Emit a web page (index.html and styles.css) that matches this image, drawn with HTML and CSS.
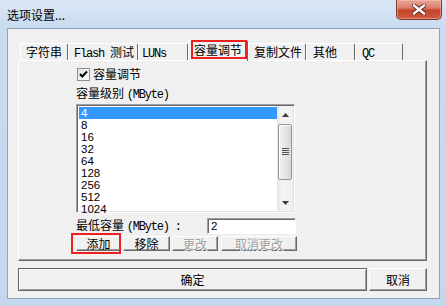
FILE: index.html
```html
<!DOCTYPE html>
<html>
<head>
<meta charset="utf-8">
<title>选项设置</title>
<link rel="stylesheet" href="styles.css">
</head>
<body>
<div class="window">
  <div class="titlebar">
    <span class="title">选项设置...</span>
    <div class="close">
      <svg width="14" height="11" viewBox="0 0 14 11">
        <path d="M2 1.5 L12 9.5 M12 1.5 L2 9.5" stroke="#5a1d14" stroke-width="4.2" stroke-linecap="square" fill="none"/>
        <path d="M2 1.5 L12 9.5 M12 1.5 L2 9.5" stroke="#ffffff" stroke-width="2.4" stroke-linecap="square" fill="none"/>
      </svg>
    </div>
  </div>
  <div class="client">
    <div class="tabs">
      <div class="tabstrip">
        <div class="tab t1">字符串</div>
        <div class="tab t2"><span class="mono">Flash </span>测试</div>
        <div class="tab t3"><span class="mono">LUNs</span></div>
        <div class="tab sel">容量调节</div>
        <div class="tab t5">复制文件</div>
        <div class="tab t6">其他</div>
        <div class="tab t7"><span class="mono">QC</span></div>
      </div>
      <div class="tabbody">
        <div class="checkrow">
          <span class="cbox">
            <svg width="11" height="11" viewBox="0 0 11 11"><path d="M2 5 L4.3 7.5 L9 2.5" stroke="#000" stroke-width="2" fill="none"/></svg>
          </span>
          <span>容量调节</span>
        </div>
        <div class="caption">容量级别 <span class="mono">(MByte)</span></div>
        <div class="listbox">
          <div class="items">
            <div class="item selected">4</div>
            <div class="item">8</div>
            <div class="item">16</div>
            <div class="item">32</div>
            <div class="item">64</div>
            <div class="item">128</div>
            <div class="item">256</div>
            <div class="item">512</div>
            <div class="item">1024</div>
          </div>
          <div class="vscroll">
            <div class="sbtn"><svg width="7" height="4" viewBox="0 0 7 4"><path d="M0 4 L3.5 0 L7 4 Z" fill="#3b3b3b"/></svg></div>
            <div class="track">
              <div class="thumb">
                <div class="grip"></div>
              </div>
            </div>
            <div class="sbtn"><svg width="7" height="4" viewBox="0 0 7 4"><path d="M0 0 L7 0 L3.5 4 Z" fill="#3b3b3b"/></svg></div>
          </div>
        </div>
        <div class="minrow">
          <span class="minlabel">最低容量 <span class="mono">(MByte) :</span></span>
          <div class="input">2</div>
        </div>
        <div class="btnrow">
          <div class="sbutton b-add">添加</div>
          <div class="sbutton b-del">移除</div>
          <div class="sbutton b-chg disabled">更改</div>
          <div class="sbutton b-cancel disabled">取消更改</div>
        </div>
      </div>
    </div>
    <div class="footer">
      <div class="btn ok">确定</div>
      <div class="btn cancel">取消</div>
    </div>
  </div>
</div>
</body>
</html>
```

FILE: styles.css
```css
* { box-sizing: border-box; margin: 0; padding: 0; }
html, body { width: 446px; height: 306px; overflow: hidden; }
body {
  font-family: "Noto Sans CJK SC", "Liberation Sans", sans-serif;
  font-size: 12px;
  color: #000;
  background: #c5d8ee;
}
.mono {
  font-family: "Liberation Mono", monospace;
  font-size: 12px;
  letter-spacing: -1.2px;
}
.window {
  width: 446px;
  height: 306px;
  display: flex;
  flex-direction: column;
  background: linear-gradient(180deg, #dbe7f5 0, #c9dbef 28px, #c4d7ed 100%);
}
.titlebar {
  height: 28px;
  flex: none;
  display: flex;
  align-items: flex-start;
  padding-left: 7px;
  padding-right: 4px;
}
.title {
  font-size: 12px;
  line-height: 14px;
  margin-top: 8px;
}
.close {
  margin-left: auto;
  width: 46px;
  height: 20px;
  border: 1px solid #7a3a30;
  border-top: none;
  border-radius: 0 0 5px 5px;
  background: linear-gradient(180deg, #e8a797 0, #da806d 40%, #c6432b 55%, #cf5a3f 100%);
  box-shadow: inset 0 0 0 1px rgba(255, 200, 190, 0.45);
  display: flex;
  align-items: center;
  justify-content: center;
}
.client {
  flex: 1;
  margin: 0 6px 7px 7px;
  border: 1px solid #8ea4bd;
  background: #f0f0f0;
  display: flex;
  flex-direction: column;
  padding: 11px 12px 7px 10px;
}
.tabs {
  height: 221px;
  display: flex;
  flex-direction: column;
}
.tabstrip {
  height: 20px;
  flex: none;
  display: flex;
  align-items: flex-end;
  padding-left: 2px;
}
.tab {
  height: 17px;
  border-top: 1px solid #ffffff;
  border-left: 1px solid #ffffff;
  border-right: 1px solid #696969;
  border-radius: 2px 2px 0 0;
  padding-left: 5px;
  line-height: 16px;
  white-space: nowrap;
  background: #f0f0f0;
}
.t1 { width: 48px; }
.t2 { width: 70px; }
.t3 { width: 50px; padding-left: 3px; }
.t5 { width: 58px; }
.t6 { width: 49px; padding-left: 6px; }
.t7 { width: 48px; padding-left: 6px; }
.tab.sel {
  width: 60px;
  height: 21px;
  margin-bottom: -1px;
  position: relative;
  z-index: 1;
  text-align: center;
  padding-left: 0;
  line-height: 17px;
}
.tab.sel::after {
  content: "";
  position: absolute;
  left: 2px;
  right: 0;
  top: -1px;
  bottom: 2px;
  border: 2px solid #ee2020;
}
.tabbody {
  flex: 1;
  border-top: 1px solid #ffffff;
  border-left: 1px solid #ffffff;
  border-right: 1px solid #696969;
  border-bottom: 1px solid #696969;
  box-shadow: inset -1px -1px 0 #a0a0a0;
  padding: 5px 0 0 57px;
  display: flex;
  flex-direction: column;
}
.checkrow {
  height: 16px;
  display: flex;
  align-items: center;
  padding-left: 1px;
  gap: 3px;
  line-height: 16px;
}
.cbox {
  width: 13px;
  height: 13px;
  border: 1px solid #8e8f8f;
  background: linear-gradient(135deg, #e2e2e2, #ffffff);
  display: flex;
  align-items: center;
  justify-content: center;
}
.caption {
  margin-top: 3px;
  height: 16px;
  line-height: 16px;
}
.listbox {
  margin-top: 3px;
  width: 219px;
  height: 109px;
  border-top: 1px solid #a0a0a0;
  border-left: 1px solid #a0a0a0;
  border-right: 1px solid #ffffff;
  border-bottom: 1px solid #ffffff;
  box-shadow: inset 1px 1px 0 #696969, inset -1px -1px 0 #e3e3e3;
  background: #ffffff;
  display: flex;
  padding: 1px 1px 1px 1px;
}
.items {
  flex: 1;
  padding-top: 1px;
  padding-left: 1px;
}
.item {
  height: 12px;
  line-height: 12px;
  padding-left: 2px;
  font-family: "Liberation Sans", sans-serif;
  font-size: 11.5px;
}
.item.selected {
  background: #3399ff;
  color: #ffffff;
}
.vscroll {
  width: 16px;
  display: flex;
  flex-direction: column;
  background: linear-gradient(90deg, #e6e6e6, #f4f4f4 30%, #f0f0f0);
}
.sbtn {
  height: 17px;
  flex: none;
  display: flex;
  align-items: center;
  justify-content: center;
}
.track {
  flex: 1;
  padding-top: 1px;
}
.thumb {
  margin: 0 1px;
  height: 56px;
  border: 1px solid #979797;
  border-radius: 2px;
  background: linear-gradient(90deg, #f2f2f2 0, #e6e6e6 50%, #d6d6d6 100%);
  box-shadow: inset 1px 1px 0 #fbfbfb;
  display: flex;
  align-items: center;
  justify-content: center;
}
.grip {
  width: 7px;
  height: 8px;
  background: repeating-linear-gradient(180deg, #555 0, #555 1px, #e2e2e2 1px, #e2e2e2 2px);
}
.minrow {
  margin-top: 5px;
  width: 220px;
  height: 16px;
  display: flex;
  align-items: center;
  justify-content: space-between;
}
.minlabel { line-height: 16px; white-space: nowrap; }
.input {
  width: 89px;
  height: 16px;
  background: #ffffff;
  border-top: 1px solid #a0a0a0;
  border-left: 1px solid #a0a0a0;
  border-right: 1px solid #ffffff;
  border-bottom: 1px solid #ffffff;
  box-shadow: inset 1px 1px 0 #696969;
  padding-left: 3px;
  font-family: "Liberation Sans", sans-serif;
  font-size: 11.5px;
  line-height: 14px;
}
.btnrow {
  margin-top: 2px;
  height: 15px;
  display: flex;
  gap: 2px;
}
.sbutton {
  height: 15px;
  border-top: 1px solid #ffffff;
  border-left: 1px solid #ffffff;
  border-right: 1px solid #696969;
  border-bottom: 1px solid #696969;
  box-shadow: inset -1px -1px 0 #a0a0a0;
  background: #f0f0f0;
  text-align: center;
  line-height: 13px;
  font-size: 12px;
}
.b-add { width: 45px; position: relative; }
.b-add::after {
  content: "";
  position: absolute;
  left: -6px;
  top: -4px;
  right: -1px;
  bottom: -4px;
  border: 2px solid #ee2020;
}
.b-del { width: 47px; }
.b-chg { width: 46px; }
.b-cancel { width: 76px; margin-left: 1px; }
.sbutton.disabled {
  color: #a0a0a0;
  text-shadow: 1px 1px 0 #ffffff;
}
.footer {
  margin-top: 7px;
  height: 23px;
  flex: none;
  display: flex;
  gap: 2px;
}
.btn {
  height: 23px;
  background: #f0f0f0;
  text-align: center;
  line-height: 21px;
}
.btn.ok {
  width: 349px;
  border: 1px solid #646464;
  box-shadow: inset 1px 1px 0 #ffffff, inset -1px -1px 0 #a0a0a0;
}
.btn.cancel {
  width: 58px;
  border-top: 1px solid #ffffff;
  border-left: 1px solid #ffffff;
  border-right: 1px solid #696969;
  border-bottom: 1px solid #696969;
  box-shadow: inset -1px -1px 0 #a0a0a0;
}
```
